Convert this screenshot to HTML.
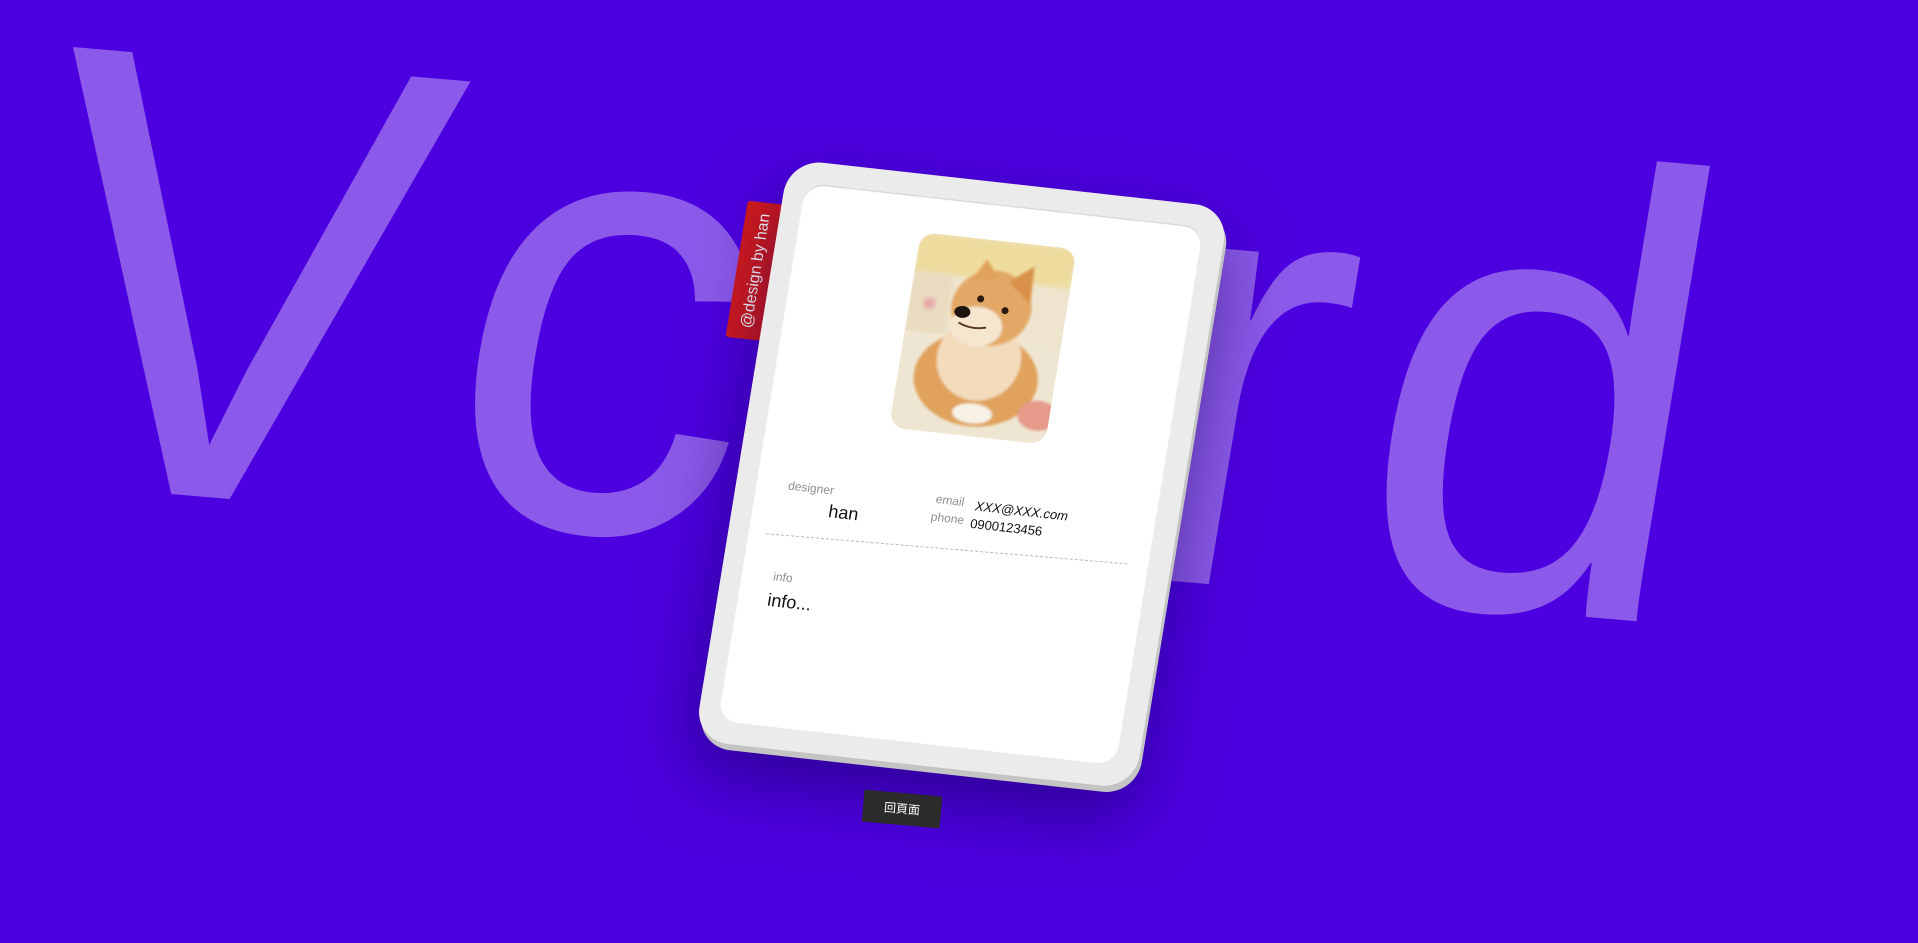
<!DOCTYPE html>
<html><head><meta charset="utf-8"><style>
html,body{margin:0;padding:0;width:1918px;height:943px;overflow:hidden;background:#4c00df;font-family:"Liberation Sans","Noto Sans CJK TC",sans-serif;}
#bg{position:absolute;left:0;top:0}
.card{position:absolute;left:789px;top:159px;width:443px;height:589px;transform-origin:0 0;transform:matrix(0.9939,0.1106,-0.1613,0.9869,0,0);}
.outer{position:absolute;inset:0;background:#ebebeb;border-radius:34px;box-shadow:3px 6px 0 #c4c4c4,0 30px 70px rgba(20,0,80,.55);}
.inner{position:absolute;left:20px;top:22px;right:22px;bottom:22px;background:#fff;border-radius:20px;box-shadow:inset 0 1px 1px #ccc;}
.tag{position:absolute;left:-34px;top:46px;width:40px;height:138px;background:#d41a1c;border-radius:3px;z-index:-1;}
.tag span{position:absolute;left:50%;top:50%;transform:translate(-50%,-50%) rotate(-90deg);white-space:nowrap;color:#fff;font-size:16px;}
.photo{position:absolute;left:142px;top:58px;width:157px;height:198px;border-radius:16px;overflow:hidden;}
.t{position:absolute;white-space:nowrap;}
.lab{color:#8e8e8e;font-size:12px;}
.dash{position:absolute;left:38px;top:375px;width:362px;border-top:1px dashed #b8b8b8;transform-origin:0 0;transform:rotate(-1.6deg);}
.btn{position:absolute;left:863px;top:793px;width:78px;height:32px;background:#2b2b2b;color:#fff;font-size:12px;text-align:center;line-height:32px;transform:rotate(5deg);}
</style></head><body>
<svg id="bg" width="1918" height="943"><text x="0" y="0" transform="matrix(0.99,0.086,-0.17,1.03,-1,479)" font-family="Liberation Sans, sans-serif" font-size="610" letter-spacing="25" fill="#8c5aea">Vcard</text></svg>
<div class="card">
  <div class="tag"><span>@design by han</span></div>
  <div class="outer"></div>
  <div class="inner"></div>
  <div class="photo">
    <svg width="157" height="198" viewBox="0 0 157 198">
      <defs><filter id="b"><feGaussianBlur stdDeviation="2.5"/></filter><filter id="b2"><feGaussianBlur stdDeviation="1.2"/></filter></defs>
      <rect width="157" height="198" fill="#efe5cf"/>
      <rect width="157" height="40" fill="#eedc9e" filter="url(#b)"/>
      <rect x="0" y="40" width="40" height="60" fill="#e9dcc0" filter="url(#b)"/>
      <circle cx="20" cy="70" r="6" fill="#e7a7a8" filter="url(#b)"/>
      <rect x="0" y="100" width="157" height="98" fill="#eee6d2"/>
      <g filter="url(#b2)">
      <ellipse cx="78" cy="140" rx="62" ry="48" fill="#e0a25c"/>
      <ellipse cx="78" cy="120" rx="42" ry="42" fill="#f3dcbc"/>
      <ellipse cx="82" cy="68" rx="40" ry="38" fill="#e3a866"/>
      <polygon points="95,40 118,22 120,60" fill="#d9914a"/>
      <polygon points="58,42 70,20 85,38" fill="#e0a25c"/>
      <ellipse cx="70" cy="88" rx="26" ry="20" fill="#f6e6cf"/>
      <ellipse cx="80" cy="175" rx="20" ry="10" fill="#f7f1e6"/>
      <ellipse cx="145" cy="170" rx="20" ry="15" fill="#e59a8a"/>
      </g>
      <ellipse cx="54" cy="75" rx="8" ry="6" fill="#1e1410"/>
      <circle cx="70" cy="60" r="3.5" fill="#2a1a10"/>
      <circle cx="96" cy="69" r="3.5" fill="#2a1a10"/>
      <path d="M52 86 Q65 92 80 88" stroke="#5a3a28" stroke-width="2" fill="none"/>
    </svg>
  </div>
  <div class="t lab" style="left:52px;top:318px">designer</div>
  <div class="t" style="left:96px;top:336px;font-size:18px;color:#111">han</div>
  <div class="t lab" style="left:200px;top:315px">email</div>
  <div class="t" style="left:240px;top:317px;font-size:13px;color:#111;font-style:italic">XXX@XXX.com</div>
  <div class="t lab" style="left:198px;top:333px">phone</div>
  <div class="t" style="left:238px;top:335px;font-size:13px;color:#111">0900123456</div>
  <div class="dash"></div>
  <div class="t lab" style="left:52px;top:410px">info</div>
  <div class="t" style="left:50px;top:431px;font-size:18px;color:#111">info...</div>
</div>
<div class="btn">回頁面</div>
</body></html>
